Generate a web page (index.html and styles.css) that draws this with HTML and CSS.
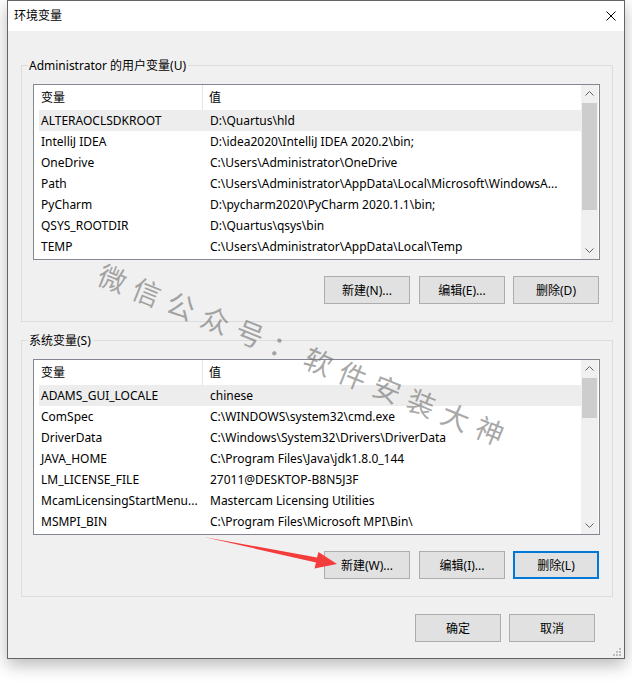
FILE: index.html
```html
<!DOCTYPE html>
<html lang="zh-CN">
<head>
<meta charset="utf-8">
<title>环境变量</title>
<link rel="stylesheet" href="styles.css">
</head>
<body>
<div class="window">
  <div class="titlebar">
    <span class="title">环境变量</span>
    <svg class="close" width="10" height="10" viewBox="0 0 10 10"><path d="M0.5 0.5 L9.5 9.5 M9.5 0.5 L0.5 9.5" stroke="#000" stroke-width="1" fill="none"/></svg>
  </div>
  <div class="content">
    <div class="group">
      <div class="group-label">Administrator 的用户变量(U)</div>
      <div class="list">
        <div class="list-main">
          <div class="list-head"><div class="h1">变量</div><div class="h2">值</div></div>
          <div class="row sel"><div class="c1">ALTERAOCLSDKROOT</div><div class="c2">D:\Quartus\hld</div></div>
          <div class="row"><div class="c1">IntelliJ IDEA</div><div class="c2">D:\idea2020\IntelliJ IDEA 2020.2\bin;</div></div>
          <div class="row"><div class="c1">OneDrive</div><div class="c2">C:\Users\Administrator\OneDrive</div></div>
          <div class="row"><div class="c1">Path</div><div class="c2">C:\Users\Administrator\AppData\Local\Microsoft\WindowsA...</div></div>
          <div class="row"><div class="c1">PyCharm</div><div class="c2">D:\pycharm2020\PyCharm 2020.1.1\bin;</div></div>
          <div class="row"><div class="c1">QSYS_ROOTDIR</div><div class="c2">D:\Quartus\qsys\bin</div></div>
          <div class="row"><div class="c1">TEMP</div><div class="c2">C:\Users\Administrator\AppData\Local\Temp</div></div>
        </div>
        <div class="scrollbar">
          <div class="sb-btn"><svg width="9" height="5" viewBox="0 0 9 5"><path d="M0.5 4.5 L4.5 0.5 L8.5 4.5" stroke="#606060" fill="none"/></svg></div>
          <div class="sb-track"><div class="sb-thumb" style="height:107px"></div></div>
          <div class="sb-btn"><svg width="9" height="5" viewBox="0 0 9 5"><path d="M0.5 0.5 L4.5 4.5 L8.5 0.5" stroke="#606060" fill="none"/></svg></div>
        </div>
      </div>
      <div class="btn-row">
        <div class="btn">新建(N)...</div>
        <div class="btn">编辑(E)...</div>
        <div class="btn">删除(D)</div>
      </div>
    </div>

    <div class="group group2">
      <div class="group-label">系统变量(S)</div>
      <div class="list">
        <div class="list-main">
          <div class="list-head"><div class="h1">变量</div><div class="h2">值</div></div>
          <div class="row sel"><div class="c1">ADAMS_GUI_LOCALE</div><div class="c2">chinese</div></div>
          <div class="row"><div class="c1">ComSpec</div><div class="c2">C:\WINDOWS\system32\cmd.exe</div></div>
          <div class="row"><div class="c1">DriverData</div><div class="c2">C:\Windows\System32\Drivers\DriverData</div></div>
          <div class="row"><div class="c1">JAVA_HOME</div><div class="c2">C:\Program Files\Java\jdk1.8.0_144</div></div>
          <div class="row"><div class="c1">LM_LICENSE_FILE</div><div class="c2">27011@DESKTOP-B8N5J3F</div></div>
          <div class="row"><div class="c1">McamLicensingStartMenu...</div><div class="c2">Mastercam Licensing Utilities</div></div>
          <div class="row"><div class="c1">MSMPI_BIN</div><div class="c2">C:\Program Files\Microsoft MPI\Bin\</div></div>
        </div>
        <div class="scrollbar">
          <div class="sb-btn"><svg width="9" height="5" viewBox="0 0 9 5"><path d="M0.5 4.5 L4.5 0.5 L8.5 4.5" stroke="#606060" fill="none"/></svg></div>
          <div class="sb-track"><div class="sb-thumb" style="height:40px"></div></div>
          <div class="sb-btn"><svg width="9" height="5" viewBox="0 0 9 5"><path d="M0.5 0.5 L4.5 4.5 L8.5 0.5" stroke="#606060" fill="none"/></svg></div>
        </div>
      </div>
      <div class="btn-row">
        <div class="btn">新建(W)...</div>
        <div class="btn">编辑(I)...</div>
        <div class="btn focus">删除(L)</div>
      </div>
    </div>

    <div class="btn-row bottom-row">
      <div class="btn">确定</div>
      <div class="btn">取消</div>
    </div>
  </div>
  <svg class="grip" width="9" height="9" viewBox="0 0 9 9">
    <rect x="7" y="1" width="2" height="2" fill="#bcbcbc"/>
    <rect x="4" y="4" width="2" height="2" fill="#bcbcbc"/>
    <rect x="7" y="4" width="2" height="2" fill="#bcbcbc"/>
    <rect x="1" y="7" width="2" height="2" fill="#bcbcbc"/>
    <rect x="4" y="7" width="2" height="2" fill="#bcbcbc"/>
    <rect x="7" y="7" width="2" height="2" fill="#bcbcbc"/>
  </svg>
</div>

<div class="watermark">微信公众号：软件安装大神</div>

<svg class="arrow" width="632" height="682" viewBox="0 0 632 682">
  <polygon points="204,537 317,557.5 318.5,552 337,564 314.5,568.5 316,562.5" fill="#f53c3c"/>
</svg>
</body>
</html>
```

FILE: styles.css
```css
* { box-sizing: border-box; }

html, body {
  margin: 0;
  padding: 0;
  background: #ffffff;
}

body {
  width: 632px;
  height: 682px;
  position: relative;
  overflow: hidden;
  font-family: "Noto Sans", "Noto Sans CJK SC", sans-serif;
  font-size: 12px;
  color: #000;
}

.window {
  position: relative;
  margin-left: 7px;
  width: 618px;
  height: 659px;
  border: 1px solid #646464;
  background: #f0f0f0;
  box-shadow: 0 6px 16px rgba(0, 0, 0, 0.28);
  display: flex;
  flex-direction: column;
}

.titlebar {
  height: 30px;
  background: #ffffff;
  display: flex;
  align-items: center;
  justify-content: space-between;
  padding: 0 8px 0 6px;
  flex: none;
}

.title {
  font-size: 12px;
  line-height: 16px;
}

.close { display: block; }

.content {
  padding: 34px 11px 16px 13px;
  display: flex;
  flex-direction: column;
}

.group {
  border: 1px solid #dcdcdc;
  padding: 0 12px 17px 11px;
  display: flex;
  flex-direction: column;
}

.group2 { margin-top: 18px; }

.group-label {
  align-self: flex-start;
  height: 17px;
  line-height: 17px;
  margin: -9px 0 0 -5px;
  padding: 0 2px 0 1px;
  background: #f0f0f0;
  white-space: nowrap;
}

.list {
  margin-top: 10px;
  height: 176px;
  border: 1px solid #828790;
  background: #ffffff;
  display: flex;
  padding-right: 1px;
}

.list-main {
  flex: 1;
  min-width: 0;
  overflow: hidden;
}

.list-head {
  height: 25px;
  display: flex;
  align-items: stretch;
}

.list-head .h1 {
  width: 169px;
  padding-left: 7px;
  border-right: 1px solid #e5e5e5;
  line-height: 25px;
}

.list-head .h2 {
  padding-left: 6px;
  line-height: 25px;
}

.row {
  height: 21px;
  margin-left: 5px;
  display: flex;
  line-height: 21px;
  white-space: nowrap;
}

.row.sel { background: #ededed; }

.row .c1 {
  width: 164px;
  padding-left: 2px;
  overflow: hidden;
  flex: none;
}

.row .c2 {
  flex: 1;
  min-width: 0;
  padding-left: 7px;
  overflow: hidden;
}

.scrollbar {
  width: 17px;
  background: #f0f0f0;
  display: flex;
  flex-direction: column;
  flex: none;
}

.sb-btn {
  height: 17px;
  display: flex;
  align-items: center;
  justify-content: center;
  flex: none;
}

.sb-btn svg { display: block; }

.sb-track {
  flex: 1;
  padding: 1px 1px 0 1px;
}

.sb-thumb {
  background: #cdcdcd;
  width: 100%;
}

.btn-row {
  display: flex;
  justify-content: flex-end;
  margin-top: 16px;
  padding-right: 1px;
}

.btn {
  width: 86px;
  height: 28px;
  border: 1px solid #adadad;
  background: #e1e1e1;
  display: flex;
  align-items: center;
  justify-content: center;
  white-space: nowrap;
}

.btn-row .btn:nth-child(2) { margin-left: 9px; }
.btn-row .btn:nth-child(3) { margin-left: 8px; }

.btn.focus { border: 2px solid #0078d7; }

.bottom-row {
  margin-top: 17px;
  padding-right: 18px;
}

.bottom-row .btn:nth-child(2) { margin-left: 8px; }

.grip {
  position: absolute;
  right: 3px;
  bottom: 2px;
  display: block;
}

.watermark {
  position: absolute;
  left: 100px;
  top: 258px;
  font-family: "Noto Sans CJK SC", sans-serif;
  font-size: 28px;
  line-height: 28px;
  letter-spacing: 9px;
  white-space: nowrap;
  color: rgba(110, 110, 110, 0.6);
  transform: rotate(22deg);
  transform-origin: 0 50%;
  pointer-events: none;
}

.arrow {
  position: absolute;
  left: 0;
  top: 0;
  pointer-events: none;
}
```
